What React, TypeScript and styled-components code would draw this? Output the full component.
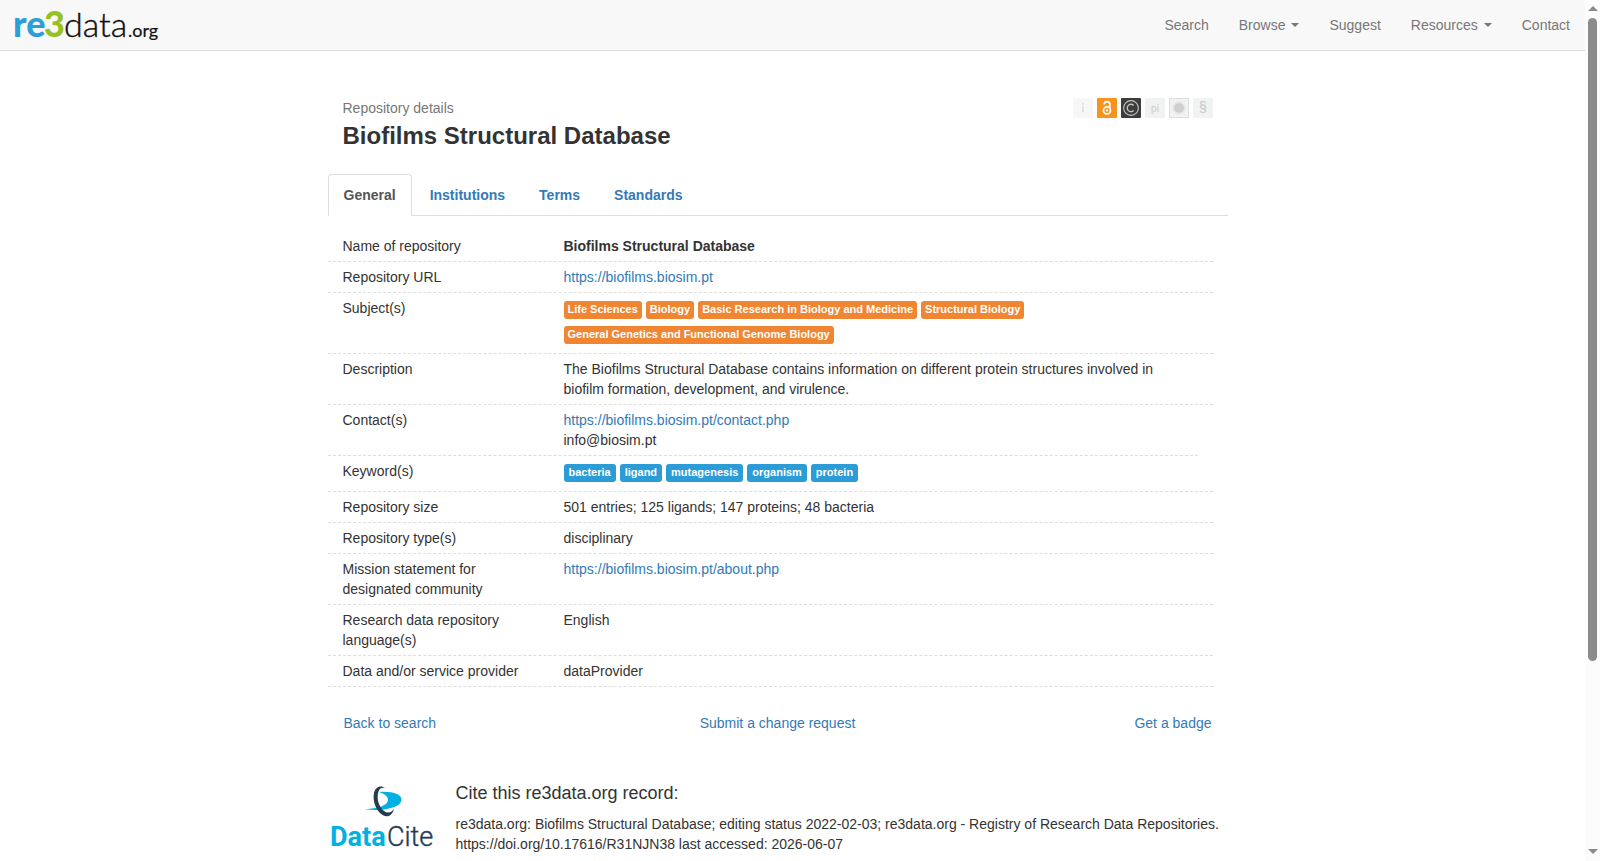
import React from "react";
import styled, { createGlobalStyle, css } from "styled-components";

const GlobalStyle = createGlobalStyle`
  *, *::before, *::after { box-sizing: border-box; }
  body {
    margin: 0;
    background: #fff;
    color: #333;
    font: 14px/20px "Liberation Sans", Arial, sans-serif;
  }
  h1, h2, p, ul, dl, dd { margin: 0; padding: 0; }
  button { font: inherit; background: none; border: 0; cursor: pointer; }
`;

const Shell = styled.div`
  display: flex;
  height: 100vh;
  overflow: hidden;
`;

const Page = styled.div`
  flex: 1;
  min-width: 0;
  overflow: hidden;
`;

const Navbar = styled.header`
  display: flex;
  justify-content: space-between;
  height: 51px;
  background: #f8f8f8;
  border-bottom: 1px solid #ddd;
`;

const Brand = styled.a`
  display: block;
  padding-left: 14px;
`;

const NavLinks = styled.nav`
  display: flex;
`;

const navItem = css`
  display: flex;
  align-items: center;
  gap: 6px;
  padding: 15px;
  line-height: 20px;
  color: #777;
  text-decoration: none;
`;

const NavLink = styled.a`
  ${navItem}
`;

const NavToggle = styled.button`
  ${navItem}
`;

const Caret = styled.span`
  border-top: 4px solid;
  border-left: 4px solid transparent;
  border-right: 4px solid transparent;
`;

const Container = styled.main`
  max-width: 930px;
  margin: 0 auto;
  padding: 47px 30px 0 0;
`;

const RecordHead = styled.div`
  display: flex;
  justify-content: space-between;
  align-items: flex-start;
  padding: 0 15px 22px;
`;

const Kicker = styled.p`
  color: #777;
`;

const Title = styled.h1`
  padding: 3px 0 1px;
  font-size: 24px;
  line-height: 30px;
  font-weight: bold;
`;

const Badges = styled.div`
  display: flex;
  gap: 4px;
`;

const Tabs = styled.div`
  display: flex;
  gap: 2px;
  border-bottom: 1px solid #ddd;
`;

const Tab = styled.button<{ $active?: boolean }>`
  margin-bottom: -1px;
  padding: 10px 15px;
  border: 1px solid transparent;
  border-radius: 4px 4px 0 0;
  line-height: 20px;
  font-weight: bold;
  color: #337ab7;
  ${({ $active }) =>
    $active &&
    css`
      color: #555;
      background: #fff;
      border-color: #ddd #ddd #fff;
    `}
`;

const Details = styled.dl`
  padding: 15px 15px 0 0;
`;

const Row = styled.div<{ $inset?: boolean }>`
  display: grid;
  grid-template-columns: 221px 1fr;
  margin-right: ${({ $inset }) => ($inset ? "15px" : "0")};
  border-bottom: 1px dashed #ddd;
`;

const Label = styled.dt`
  padding: 5px 15px;
`;

const Value = styled.dd<{ $strong?: boolean }>`
  padding: 5px 30px 5px 15px;
  font-weight: ${({ $strong }) => ($strong ? "bold" : "normal")};
`;

const Link = styled.a`
  color: #337ab7;
  text-decoration: none;
`;

const Tags = styled.ul`
  display: flex;
  flex-wrap: wrap;
  gap: 7px 4px;
  padding: 3px 0 4px;
  list-style: none;
`;

const Tag = styled.li<{ $kind: "subject" | "keyword" }>`
  padding: 0 ${({ $kind }) => ($kind === "subject" ? "4px" : "5px")} 2px;
  border-radius: 3px;
  background: ${({ $kind }) => ($kind === "subject" ? "#f08532" : "#2b9cd6")};
  color: #fff;
  font-size: 11px;
  line-height: 16px;
  font-weight: bold;
`;

const Actions = styled.div`
  display: grid;
  grid-template-columns: 1fr auto 1fr;
  padding: 26px 16px 50px;
  > :last-child {
    justify-self: end;
  }
  > :first-child {
    justify-self: start;
  }
`;

const Citation = styled.section`
  display: flex;
  gap: 22px;
`;

const CiteTitle = styled.h2`
  padding-bottom: 11px;
  font-size: 18px;
  line-height: 20px;
  font-weight: normal;
`;

const CiteLogo = styled.svg`
  flex: none;
`;

const Scrollbar = styled.div`
  display: flex;
  flex-direction: column;
  align-items: center;
  width: 15px;
  padding: 6px 0 7px;
  background: #fcfcfc;
`;

const Arrow = styled.span<{ $down?: boolean }>`
  border: solid transparent;
  border-width: ${({ $down }) => ($down ? "5px 5px 0" : "0 5px 5px")};
  border-top-color: ${({ $down }) => ($down ? "#8b8b8b" : "transparent")};
  border-bottom-color: ${({ $down }) => ($down ? "transparent" : "#8b8b8b")};
`;

const Track = styled.div`
  flex: 1;
  width: 9px;
  margin: 7px 0;
`;

const Thumb = styled.div`
  height: 78%;
  border-radius: 5px;
  background: #8b8b8b;
`;

const subjects = [
  "Life Sciences",
  "Biology",
  "Basic Research in Biology and Medicine",
  "Structural Biology",
  "General Genetics and Functional Genome Biology",
];
const keywords = ["bacteria", "ligand", "mutagenesis", "organism", "protein"];

type Field = { label: string; value: React.ReactNode; strong?: boolean; inset?: boolean };

const TagList = ({ items, kind }: { items: string[]; kind: "subject" | "keyword" }) => (
  <Tags>
    {items.map((t) => (
      <Tag key={t} $kind={kind}>
        {t}
      </Tag>
    ))}
  </Tags>
);

const fields: Field[] = [
  { label: "Name of repository", value: "Biofilms Structural Database", strong: true },
  { label: "Repository URL", value: <Link href="#url">https://biofilms.biosim.pt</Link> },
  { label: "Subject(s)", value: <TagList items={subjects} kind="subject" /> },
  {
    label: "Description",
    value:
      "The Biofilms Structural Database contains information on different protein structures involved in biofilm formation, development, and virulence.",
  },
  {
    label: "Contact(s)",
    inset: true,
    value: (
      <>
        <Link href="#contact-page">https://biofilms.biosim.pt/contact.php</Link>
        <br />
        info@biosim.pt
      </>
    ),
  },
  { label: "Keyword(s)", value: <TagList items={keywords} kind="keyword" /> },
  { label: "Repository size", value: "501 entries; 125 ligands; 147 proteins; 48 bacteria" },
  { label: "Repository type(s)", value: "disciplinary" },
  {
    label: "Mission statement for designated community",
    value: <Link href="#about">https://biofilms.biosim.pt/about.php</Link>,
  },
  { label: "Research data repository language(s)", value: "English" },
  { label: "Data and/or service provider", value: "dataProvider" },
];

const Logo = () => (
  <svg width="150" height="50" viewBox="0 0 150 50" fontFamily="Lato, sans-serif" role="img" aria-label="re3data.org">
    <text x="-1" y="37" fontSize="36" fontWeight="900" fill="#2b9fd6">re</text>
    <text x="30" y="37" fontSize="36" fontWeight="900" fill="#96c11f">3</text>
    <text x="50" y="37" fontSize="34" fontWeight="300" fill="#111" stroke="#111" strokeWidth=".4">data</text>
    <text x="114" y="37" fontSize="18" fontWeight="400" fill="#111" stroke="#111" strokeWidth=".2">.org</text>
  </svg>
);

const StatusBadges = () => (
  <Badges>
    <svg width="20" height="20">
      <rect width="20" height="20" rx="1" fill="#f7f7f7" />
      <rect x="9" y="8" width="2" height="6" fill="#e2e2e2" />
      <rect x="9" y="5" width="2" height="2" fill="#e2e2e2" />
    </svg>
    <svg width="20" height="20">
      <rect width="20" height="20" rx="1" fill="#f7931e" />
      <g fill="none" stroke="#fff" strokeWidth="1.7">
        <circle cx="10" cy="12.4" r="3.5" />
        <path d="M7.2 6.6V6.2a2.8 2.6 0 0 1 5.6 0V11" />
      </g>
      <circle cx="10" cy="12.4" r="1.2" fill="#fff" />
    </svg>
    <svg width="20" height="20">
      <rect width="20" height="20" rx="1" fill="#3c3c3b" />
      <g fill="none" stroke="#c4c4c4">
        <circle cx="10" cy="10" r="7.4" strokeWidth="1.1" />
        <path d="M12.6 7.4a3.7 3.7 0 1 0 0 5.2" strokeWidth="1.4" />
      </g>
    </svg>
    <svg width="20" height="20">
      <rect width="20" height="20" rx="1" fill="#f1f2f2" />
      <text x="10" y="14" fontSize="10" textAnchor="middle" fill="#d4d5d5" stroke="#d4d5d5" strokeWidth=".3">pi</text>
    </svg>
    <svg width="20" height="20">
      <rect x=".5" y=".5" width="19" height="19" fill="#f1f2f2" stroke="#dedede" />
      <circle cx="10" cy="10" r="5" fill="#cfcfcf" />
      <circle cx="10" cy="10" r="5.9" fill="none" stroke="#d8d8d8" strokeWidth="1" strokeDasharray="1.2 .6" />
    </svg>
    <svg width="20" height="20">
      <rect width="20" height="20" rx="1" fill="#f1f2f2" />
      <text x="10" y="14" fontSize="14" textAnchor="middle" fill="#cbcccc" stroke="#cbcccc" strokeWidth=".2">§</text>
    </svg>
  </Badges>
);

const DataCiteLogo = () => (
  <CiteLogo width="106" height="76" viewBox="0 0 106 76" fontFamily="Roboto, sans-serif" role="img" aria-label="DataCite">
    <path d="M51 9C64 8 74 11 73.500 17C73 24.500 55 29 36 26C46 26 58.500 24 60 17.500C60.500 13.500 56 10.500 51 9Z" fill="#00b1e2" />
    <path
      d="M57.500 5.200C53 1.800 47.500 3.500 46 10C44.300 18 48 28 55 32.300C60 35 64.500 32 66 26C63 30 59.500 30.500 56 28C50 23.500 48.500 14 50.500 8.500C51.800 5 54.500 4.300 57.500 5.200Z"
      fill="#243b54"
    />
    <text x="2" y="63" fontSize="27" fontWeight="700" fill="#00b1e2">Data</text>
    <text x="59" y="63" fontSize="27" fontWeight="300" fill="#243b54" stroke="#243b54" strokeWidth=".4">Cite</text>
  </CiteLogo>
);

export default function App() {
  return (
    <>
      <GlobalStyle />
      <Shell>
        <Page>
          <Navbar>
            <Brand href="#home">
              <Logo />
            </Brand>
            <NavLinks>
              <NavLink href="#search">Search</NavLink>
              <NavToggle type="button">
                Browse <Caret />
              </NavToggle>
              <NavLink href="#suggest">Suggest</NavLink>
              <NavToggle type="button">
                Resources <Caret />
              </NavToggle>
              <NavLink href="#contact">Contact</NavLink>
            </NavLinks>
          </Navbar>
          <Container>
            <RecordHead>
              <div>
                <Kicker>Repository details</Kicker>
                <Title>Biofilms Structural Database</Title>
              </div>
              <StatusBadges />
            </RecordHead>
            <Tabs role="tablist">
              <Tab type="button" role="tab" aria-selected $active>General</Tab>
              <Tab type="button" role="tab">Institutions</Tab>
              <Tab type="button" role="tab">Terms</Tab>
              <Tab type="button" role="tab">Standards</Tab>
            </Tabs>
            <Details>
              {fields.map((f) => (
                <Row key={f.label} $inset={f.inset}>
                  <Label>{f.label}</Label>
                  <Value $strong={f.strong}>{f.value}</Value>
                </Row>
              ))}
            </Details>
            <Actions>
              <Link href="#back">Back to search</Link>
              <Link href="#change">Submit a change request</Link>
              <Link href="#badge">Get a badge</Link>
            </Actions>
            <Citation>
              <DataCiteLogo />
              <div>
                <CiteTitle>Cite this re3data.org record:</CiteTitle>
                <p>
                  re3data.org: Biofilms Structural Database; editing status 2022-02-03; re3data.org - Registry of
                  Research Data Repositories. https://doi.org/10.17616/R31NJN38 last accessed: 2026-06-07
                </p>
              </div>
            </Citation>
          </Container>
        </Page>
        <Scrollbar aria-hidden="true">
          <Arrow />
          <Track>
            <Thumb />
          </Track>
          <Arrow $down />
        </Scrollbar>
      </Shell>
    </>
  );
}
